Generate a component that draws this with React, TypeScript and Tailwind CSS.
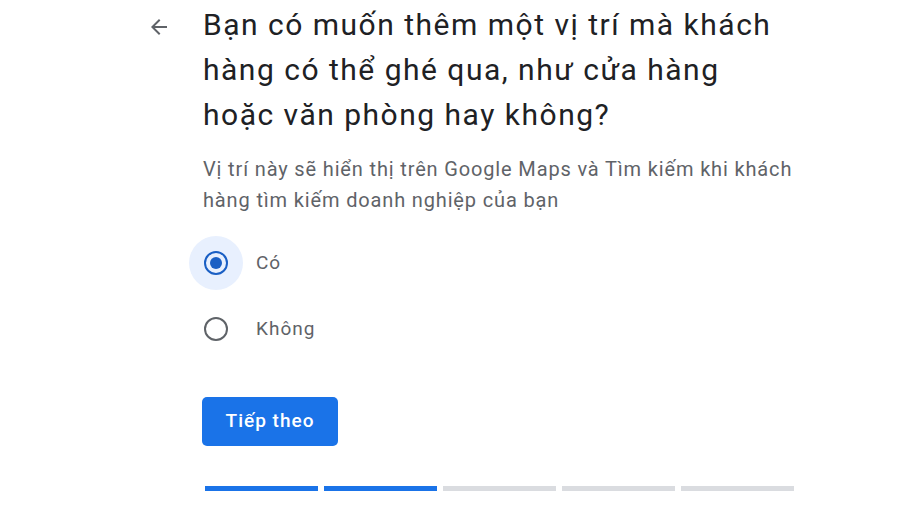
import React, { useState } from "react";

export default function App() {
  const [choice, setChoice] = useState<"yes" | "no">("yes");
  const steps = [true, true, false, false, false];

  return (
    <div className="w-[900px] h-[513px] bg-white overflow-hidden font-['Roboto',sans-serif]">
      <div className="flex pt-[2px] pl-[146px]">
        {/* Back arrow */}
        <button className="w-[26px] h-[26px] mt-[12px] text-[#5f6368] flex items-center justify-center">
          <svg width="24" height="24" viewBox="0 0 24 24" fill="currentColor">
            <path d="M20 11H7.83l5.59-5.59L12 4l-8 8 8 8 1.41-1.41L7.83 13H20v-2z" />
          </svg>
        </button>

        <div className="ml-[31px] w-[640px]">
          <h1 className="w-[572px] text-[30px] leading-[45px] tracking-[1.5px] text-[#202124] font-normal">
            Bạn có muốn thêm một vị trí mà khách hàng có thể ghé qua, như cửa hàng hoặc văn phòng hay không?
          </h1>

          <p className="mt-[17px] w-[610px] text-[20px] leading-[31px] tracking-[0.85px] text-[#5f6368]">
            Vị trí này sẽ hiển thị trên Google Maps và Tìm kiếm khi khách hàng tìm kiếm doanh nghiệp của bạn
          </p>

          {/* Radio options */}
          <div className="mt-[20px] flex flex-col gap-[12px] -ml-[14px]">
            <label className="flex items-center cursor-pointer" onClick={() => setChoice("yes")}>
              <span
                className={`w-[54px] h-[54px] rounded-full flex items-center justify-center ${
                  choice === "yes" ? "bg-[#e8f0fe]" : ""
                }`}
              >
                <span
                  className={`w-[24px] h-[24px] rounded-full border-[2.5px] flex items-center justify-center ${
                    choice === "yes" ? "border-[#1a5fc4]" : "border-[#5f6368]"
                  }`}
                >
                  {choice === "yes" && <span className="w-[12px] h-[12px] rounded-full bg-[#1a5fc4]" />}
                </span>
              </span>
              <span className="ml-[13px] text-[19px] tracking-[1px] text-[#5f6368]">Có</span>
            </label>

            <label className="flex items-center cursor-pointer" onClick={() => setChoice("no")}>
              <span
                className={`w-[54px] h-[54px] rounded-full flex items-center justify-center ${
                  choice === "no" ? "bg-[#e8f0fe]" : ""
                }`}
              >
                <span
                  className={`w-[24px] h-[24px] rounded-full border-[2.5px] flex items-center justify-center ${
                    choice === "no" ? "border-[#1a5fc4]" : "border-[#5f6368]"
                  }`}
                >
                  {choice === "no" && <span className="w-[12px] h-[12px] rounded-full bg-[#1a5fc4]" />}
                </span>
              </span>
              <span className="ml-[13px] text-[19px] tracking-[1px] text-[#5f6368]">Không</span>
            </label>
          </div>

          <button className="mt-[41px] -ml-[1px] w-[136px] h-[49px] rounded-[5px] bg-[#1a73e8] text-white text-[19px] tracking-[1px] font-medium">
            Tiếp theo
          </button>

          {/* Progress */}
          <div className="mt-[40px] ml-[2px] flex gap-[6px]">
            {steps.map((done, i) => (
              <div
                key={i}
                className={`w-[113px] h-[5px] ${done ? "bg-[#1a73e8]" : "bg-[#dadce0]"}`}
              />
            ))}
          </div>
        </div>
      </div>
    </div>
  );
}
